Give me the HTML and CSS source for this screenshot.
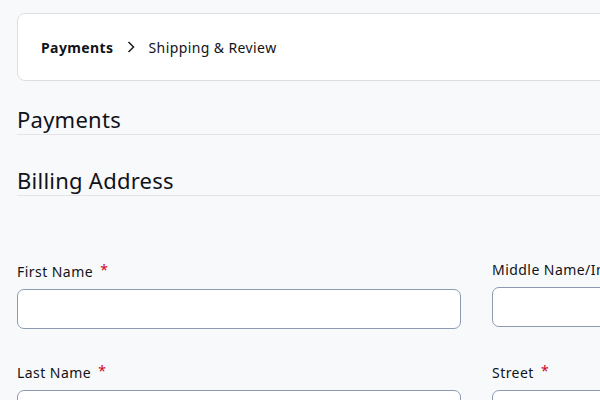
FILE: index.html
```html
<!DOCTYPE html>
<html lang="en">
<head>
    <meta charset="UTF-8">
    <meta name="viewport" content="width=device-width, initial-scale=1.0">
    <title>Checkout - Payments</title>
    <link rel="stylesheet" href="styles.css">
</head>
<body>
    <div class="page">
        <div class="crumbs">
            <span class="crumb-active">Payments</span>
            <svg class="crumb-sep" width="12" height="12" viewBox="0 0 12 12">
                <path d="M3.5 1 L8.5 6 L3.5 11" fill="none" stroke="#1b1d22" stroke-width="1.5"/>
            </svg>
            <span class="crumb">Shipping &amp; Review</span>
        </div>

        <h2 class="section-title">Payments</h2>
        <h2 class="section-title sub">Billing Address</h2>

        <div class="form-grid">
            <div class="field">
                <label for="first">First Name <span class="req">*</span></label>
                <input type="text" id="first">
            </div>
            <div class="field">
                <label for="middle">Middle Name/Initial</label>
                <input type="text" id="middle">
            </div>
            <div class="field">
                <label for="last">Last Name <span class="req">*</span></label>
                <input type="text" id="last">
            </div>
            <div class="field">
                <label for="street">Street <span class="req">*</span></label>
                <input type="text" id="street">
            </div>
        </div>
    </div>
</body>
</html>
```

FILE: styles.css
```css
body {
    margin: 0;
    font-family: "Noto Sans", sans-serif;
    background-color: #f8f9fb;
    color: #111318;
    overflow: hidden;
}

.page {
    width: 940px;
    padding: 13px 17px;
}

.crumbs {
    display: flex;
    align-items: center;
    height: 66px;
    padding: 0 23px;
    background: white;
    border: 1px solid #dcdee3;
    border-radius: 8px;
    font-size: 14px;
    letter-spacing: 0.4px;
}

.crumb-active {
    font-weight: bold;
}

.crumb-sep {
    margin: 0 12px 0 11px;
}

.section-title {
    margin: 23px 0 0;
    font-size: 22px;
    font-weight: normal;
    line-height: 30px;
    letter-spacing: 0.25px;
    border-bottom: 1px solid #e2e4e8;
}

.section-title.sub {
    margin-top: 30px;
}

.form-grid {
    display: grid;
    grid-template-columns: 444px 444px;
    column-gap: 31px;
    row-gap: 32px;
    margin-top: 64px;
}

.field label {
    display: block;
    font-size: 14px;
    line-height: 20px;
    letter-spacing: 0.45px;
    margin-bottom: 7px;
}

.req {
    color: #d0021b;
    margin-left: 3px;
    vertical-align: 2px;
}

.field input {
    box-sizing: border-box;
    width: 100%;
    height: 40px;
    border: 1px solid #8d9ab3;
    border-radius: 7px;
    background: white;
    font-family: inherit;
    font-size: 14px;
    padding: 0 12px;
}
```
